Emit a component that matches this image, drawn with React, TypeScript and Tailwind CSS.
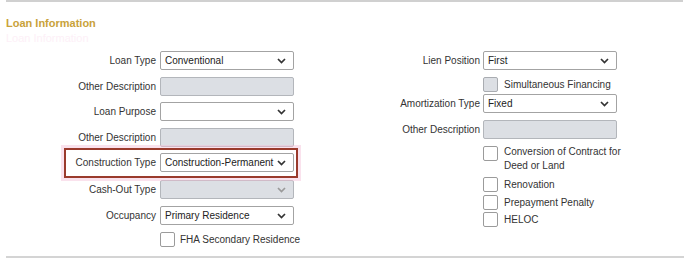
import React from "react";

const font = { fontFamily: '"Liberation Sans", Arial, sans-serif' };

function Chevron({ disabled }: { disabled?: boolean }) {
    return (
        <svg width="9" height="6" viewBox="0 0 9 6" className="shrink-0">
            <polyline
                points="1,1 4.5,4.5 8,1"
                fill="none"
                stroke={disabled ? "#9a9a9a" : "#333333"}
                strokeWidth="1.7"
            />
        </svg>
    );
}

function Select({ value, disabled }: { value?: string; disabled?: boolean }) {
    return (
        <div
            className={`w-[134px] h-[19px] border rounded-[2px] flex items-center justify-between pl-[4px] pr-[7px] text-[10px] text-[#222] ${
                disabled ? "bg-[#dcdfe4] border-[#b3b6bb]" : "bg-white border-[#a3a3a3]"
            }`}
        >
            <span className="whitespace-nowrap">{value}</span>
            <Chevron disabled={disabled} />
        </div>
    );
}

function TextBox() {
    return <div className="w-[134px] h-[19px] border border-[#b3b6bb] rounded-[2px] bg-[#dcdfe4]" />;
}

function Check({ disabled }: { disabled?: boolean }) {
    return (
        <div
            className={`w-[15px] h-[15px] shrink-0 rounded-[2px] border ${
                disabled ? "bg-[#dcdfe4] border-[#a9acb1]" : "bg-white border-[#9b9b9b]"
            }`}
        />
    );
}

function Row({ label, children, labelW, className = "" }: { label: string; children: React.ReactNode; labelW: string; className?: string }) {
    return (
        <div className={`flex items-center ${className}`}>
            <div className={`${labelW} text-right text-[10px] text-[#333] whitespace-nowrap`}>{label}</div>
            {children}
        </div>
    );
}

export default function App() {
    const L = "w-[160px] pr-[4px]";
    const R = "w-[153px] pr-[3px]";
    return (
        <div className="w-[688px] h-[260px] bg-white flex flex-col" style={font}>
            <div className="ml-[6px] mr-[5px] h-[2px] bg-[#d0d0d0]" />
            <div className="relative ml-[6px] mt-[14px] h-[14px]">
                <div className="text-[11px] leading-[14px] font-bold text-[#c9a23a]">Loan Information</div>
                <div className="absolute left-0 top-[15px] text-[11px] leading-[14px] text-[#fdf0f7]">Loan Information</div>
            </div>

            <div className="flex mt-[21px]">
                {/* left column */}
                <div className="w-[294px] shrink-0 flex flex-col">
                    <Row label="Loan Type" labelW={L}>
                        <Select value="Conventional" />
                    </Row>
                    <Row label="Other Description" labelW={L} className="mt-[7px]">
                        <TextBox />
                    </Row>
                    <Row label="Loan Purpose" labelW={L} className="mt-[6px]">
                        <Select />
                    </Row>
                    <Row label="Other Description" labelW={L} className="mt-[7px]">
                        <TextBox />
                    </Row>
                    <div className="relative mt-[6px]">
                        <Row label="Construction Type" labelW={L}>
                            <Select value="Construction-Permanent" />
                        </Row>
                        <div className="absolute left-[64px] right-[-4px] top-[-5px] bottom-[-6px] border-2 border-[#9a3a2c] shadow-[0_0_0_3px_rgba(245,190,215,0.45)]" />
                    </div>
                    <Row label="Cash-Out Type" labelW={L} className="mt-[8px]">
                        <Select disabled />
                    </Row>
                    <Row label="Occupancy" labelW={L} className="mt-[7px]">
                        <Select value="Primary Residence" />
                    </Row>
                    <div className="flex items-center mt-[7px] pl-[160px] gap-[5px]">
                        <Check />
                        <span className="text-[10px] text-[#333] whitespace-nowrap">FHA Secondary Residence</span>
                    </div>
                </div>

                {/* right column */}
                <div className="ml-[36px] flex flex-col">
                    <Row label="Lien Position" labelW={R}>
                        <Select value="First" />
                    </Row>
                    <div className="flex items-center mt-[7px] pl-[153px] gap-[6px]">
                        <Check disabled />
                        <span className="text-[10px] text-[#333]">Simultaneous Financing</span>
                    </div>
                    <Row label="Amortization Type" labelW={R} className="mt-[2px]">
                        <Select value="Fixed" />
                    </Row>
                    <Row label="Other Description" labelW={R} className="mt-[7px]">
                        <TextBox />
                    </Row>
                    <div className="flex items-start mt-[7px] pl-[153px] gap-[6px]">
                        <Check />
                        <span className="text-[10px] leading-[14px] text-[#333] -mt-[1px]">
                            Conversion of Contract for
                            <br />
                            Deed or Land
                        </span>
                    </div>
                    <div className="flex items-center mt-[4px] pl-[153px] gap-[6px]">
                        <Check />
                        <span className="text-[10px] text-[#333]">Renovation</span>
                    </div>
                    <div className="flex items-center mt-[3px] pl-[153px] gap-[6px]">
                        <Check />
                        <span className="text-[10px] text-[#333]">Prepayment Penalty</span>
                    </div>
                    <div className="flex items-center mt-[2px] pl-[153px] gap-[6px]">
                        <Check />
                        <span className="text-[10px] text-[#333]">HELOC</span>
                    </div>
                </div>
            </div>

            <div className="mt-auto mb-[2px] ml-[6px] mr-[4px] h-[2px] bg-[#d4d4d4]" />
        </div>
    );
}
